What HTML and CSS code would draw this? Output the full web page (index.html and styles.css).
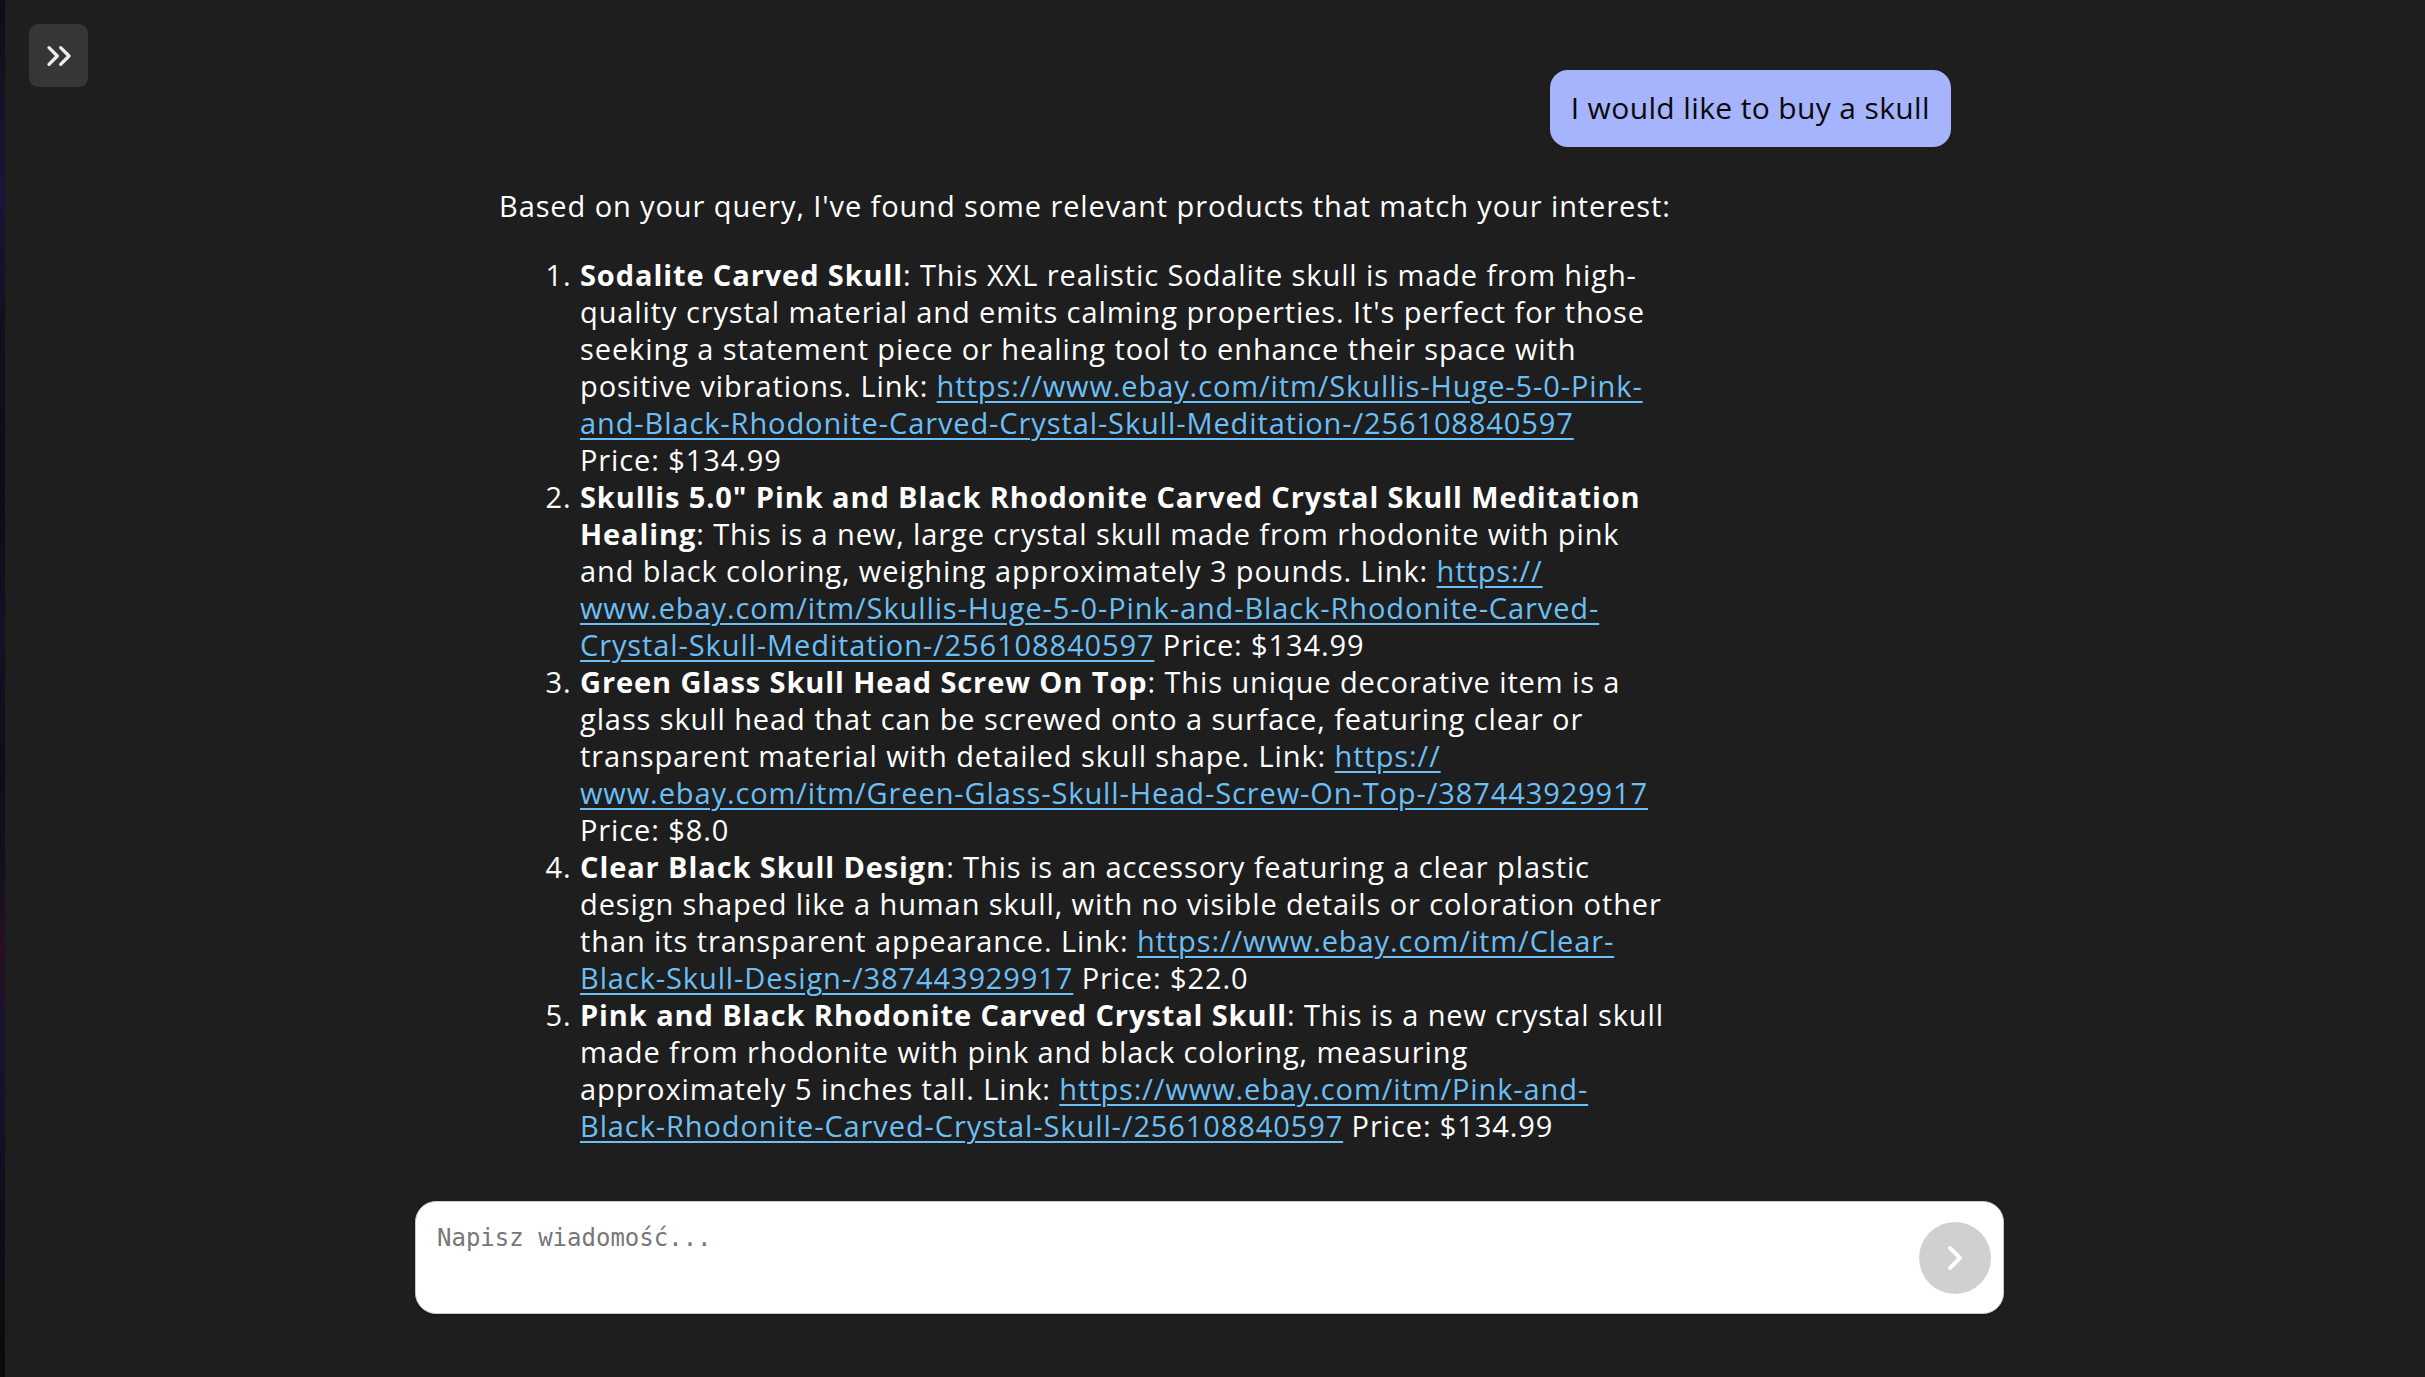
FILE: index.html
```html
<!DOCTYPE html>
<html lang="en">
<head>
<meta charset="utf-8">
<title>Chat</title>
<link rel="stylesheet" href="styles.css">
</head>
<body>
<div class="app">
  <div class="edge"></div>
  <main class="main">
    <button class="toggle" aria-label="Open sidebar">
      <svg viewBox="0 0 24 24" width="40" height="40" fill="none" stroke="currentColor" stroke-width="2" stroke-linecap="round" stroke-linejoin="round"><path d="m6 17 5-5-5-5"/><path d="m13 17 5-5-5-5"/></svg>
    </button>
    <div class="chat">
      <div class="messages">
        <div class="user-msg">I would like to buy a skull</div>
        <div class="bot-msg">
          <p class="intro">Based on your query, I've found some relevant products that match your interest:</p>
          <ol class="products">
            <li><strong>Sodalite Carved Skull</strong>: This XXL realistic Sodalite skull is made from high-<br>quality crystal material and emits calming properties. It's perfect for those<br>seeking a statement piece or healing tool to enhance their space with<br>positive vibrations. Link: <a href="#">https://www.ebay.com/itm/Skullis-Huge-5-0-Pink-<br>and-Black-Rhodonite-Carved-Crystal-Skull-Meditation-/256108840597</a><br>Price: $134.99</li>
            <li><strong>Skullis 5.0" Pink and Black Rhodonite Carved Crystal Skull Meditation<br>Healing</strong>: This is a new, large crystal skull made from rhodonite with pink<br>and black coloring, weighing approximately 3 pounds. Link: <a href="#">https://<br>www.ebay.com/itm/Skullis-Huge-5-0-Pink-and-Black-Rhodonite-Carved-<br>Crystal-Skull-Meditation-/256108840597</a> Price: $134.99</li>
            <li><strong>Green Glass Skull Head Screw On Top</strong>: This unique decorative item is a<br>glass skull head that can be screwed onto a surface, featuring clear or<br>transparent material with detailed skull shape. Link: <a href="#">https://<br>www.ebay.com/itm/Green-Glass-Skull-Head-Screw-On-Top-/387443929917</a><br>Price: $8.0</li>
            <li><strong>Clear Black Skull Design</strong>: This is an accessory featuring a clear plastic<br>design shaped like a human skull, with no visible details or coloration other<br>than its transparent appearance. Link: <a href="#">https://www.ebay.com/itm/Clear-<br>Black-Skull-Design-/387443929917</a> Price: $22.0</li>
            <li><strong>Pink and Black Rhodonite Carved Crystal Skull</strong>: This is a new crystal skull<br>made from rhodonite with pink and black coloring, measuring<br>approximately 5 inches tall. Link: <a href="#">https://www.ebay.com/itm/Pink-and-<br>Black-Rhodonite-Carved-Crystal-Skull-/256108840597</a> Price: $134.99</li>
          </ol>
        </div>
      </div>
      <form class="composer">
        <textarea class="input" placeholder="Napisz wiadomość..."></textarea>
        <button type="button" class="send" aria-label="Send">
          <svg viewBox="0 0 24 24" width="40" height="40" fill="none" stroke="currentColor" stroke-width="2.4" stroke-linecap="round" stroke-linejoin="round"><path d="m9 18 6-6-6-6"/></svg>
        </button>
      </form>
    </div>
  </main>
</div>
</body>
</html>
```

FILE: styles.css
```css
* { box-sizing: border-box; }
html, body { margin: 0; height: 100%; }
body {
  background: #1e1e1e;
  font-family: "Open Sans", "Noto Sans", sans-serif;
  color: #ffffff;
  overflow: hidden;
}
.app {
  display: flex;
  height: 100vh;
}
.edge {
  width: 5px;
  flex: none;
  background: linear-gradient(180deg, #0e0e14 0%, #14132a 8%, #17153a 14%, #101020 24%, #0d0d18 36%, #131126 46%, #0e0e1a 56%, #151020 64%, #2a0f22 69%, #1c1230 74%, #13122a 80%, #0d0d18 90%, #0b0b0b 100%);
}
.main {
  flex: 1;
  position: relative;
  display: flex;
  flex-direction: column;
}
.toggle {
  position: absolute;
  left: 24px;
  top: 24px;
  width: 59px;
  height: 63px;
  border: none;
  border-radius: 9px;
  background: #363636;
  color: #ececec;
  display: flex;
  align-items: center;
  justify-content: center;
  padding: 0;
}
.chat {
  width: 1589px;
  margin-left: 410px;
  height: 100%;
  display: flex;
  flex-direction: column;
}
.messages {
  flex: 1;
  display: flex;
  flex-direction: column;
  padding: 70px 53px 0 84px;
}
.user-msg {
  align-self: flex-end;
  background: #a5b4fc;
  color: #0a0a0a;
  font-size: 30px;
  letter-spacing: 0.37px;
  line-height: 45px;
  padding: 15px 21px 17px;
  border-radius: 18px;
}
.bot-msg {
  font-size: 29px;
  letter-spacing: 0.9px;
  line-height: 37px;
  margin-top: 40px;
  white-space: nowrap;
}
.intro {
  margin: 0 0 32px;
}
.products {
  margin: 0;
  padding-left: 81px;
}
.products strong { font-weight: 700; }
.products a {
  color: #6bbff5;
  text-decoration: underline;
  text-decoration-thickness: 2px;
  text-underline-offset: 4px;
}
.composer {
  display: flex;
  align-items: center;
  height: 113px;
  margin-bottom: 63px;
  background: #ffffff;
  border: 1px solid #c9c9c9;
  border-radius: 21px;
  box-shadow: 0 1px 2px rgba(0,0,0,0.35);
  padding-right: 12px;
}
.input {
  flex: 1;
  align-self: stretch;
  border: none;
  outline: none;
  resize: none;
  background: transparent;
  font-family: "DejaVu Sans Mono", monospace;
  font-size: 24px;
  padding: 22px 20px 10px 21px;
  color: #222;
  border-radius: 21px;
}
.input::placeholder { color: #777777; }
.send {
  flex: none;
  width: 72px;
  height: 72px;
  border-radius: 50%;
  border: none;
  background: #d0d0d0;
  color: #ffffff;
  display: flex;
  align-items: center;
  justify-content: center;
  padding: 0;
}
```
